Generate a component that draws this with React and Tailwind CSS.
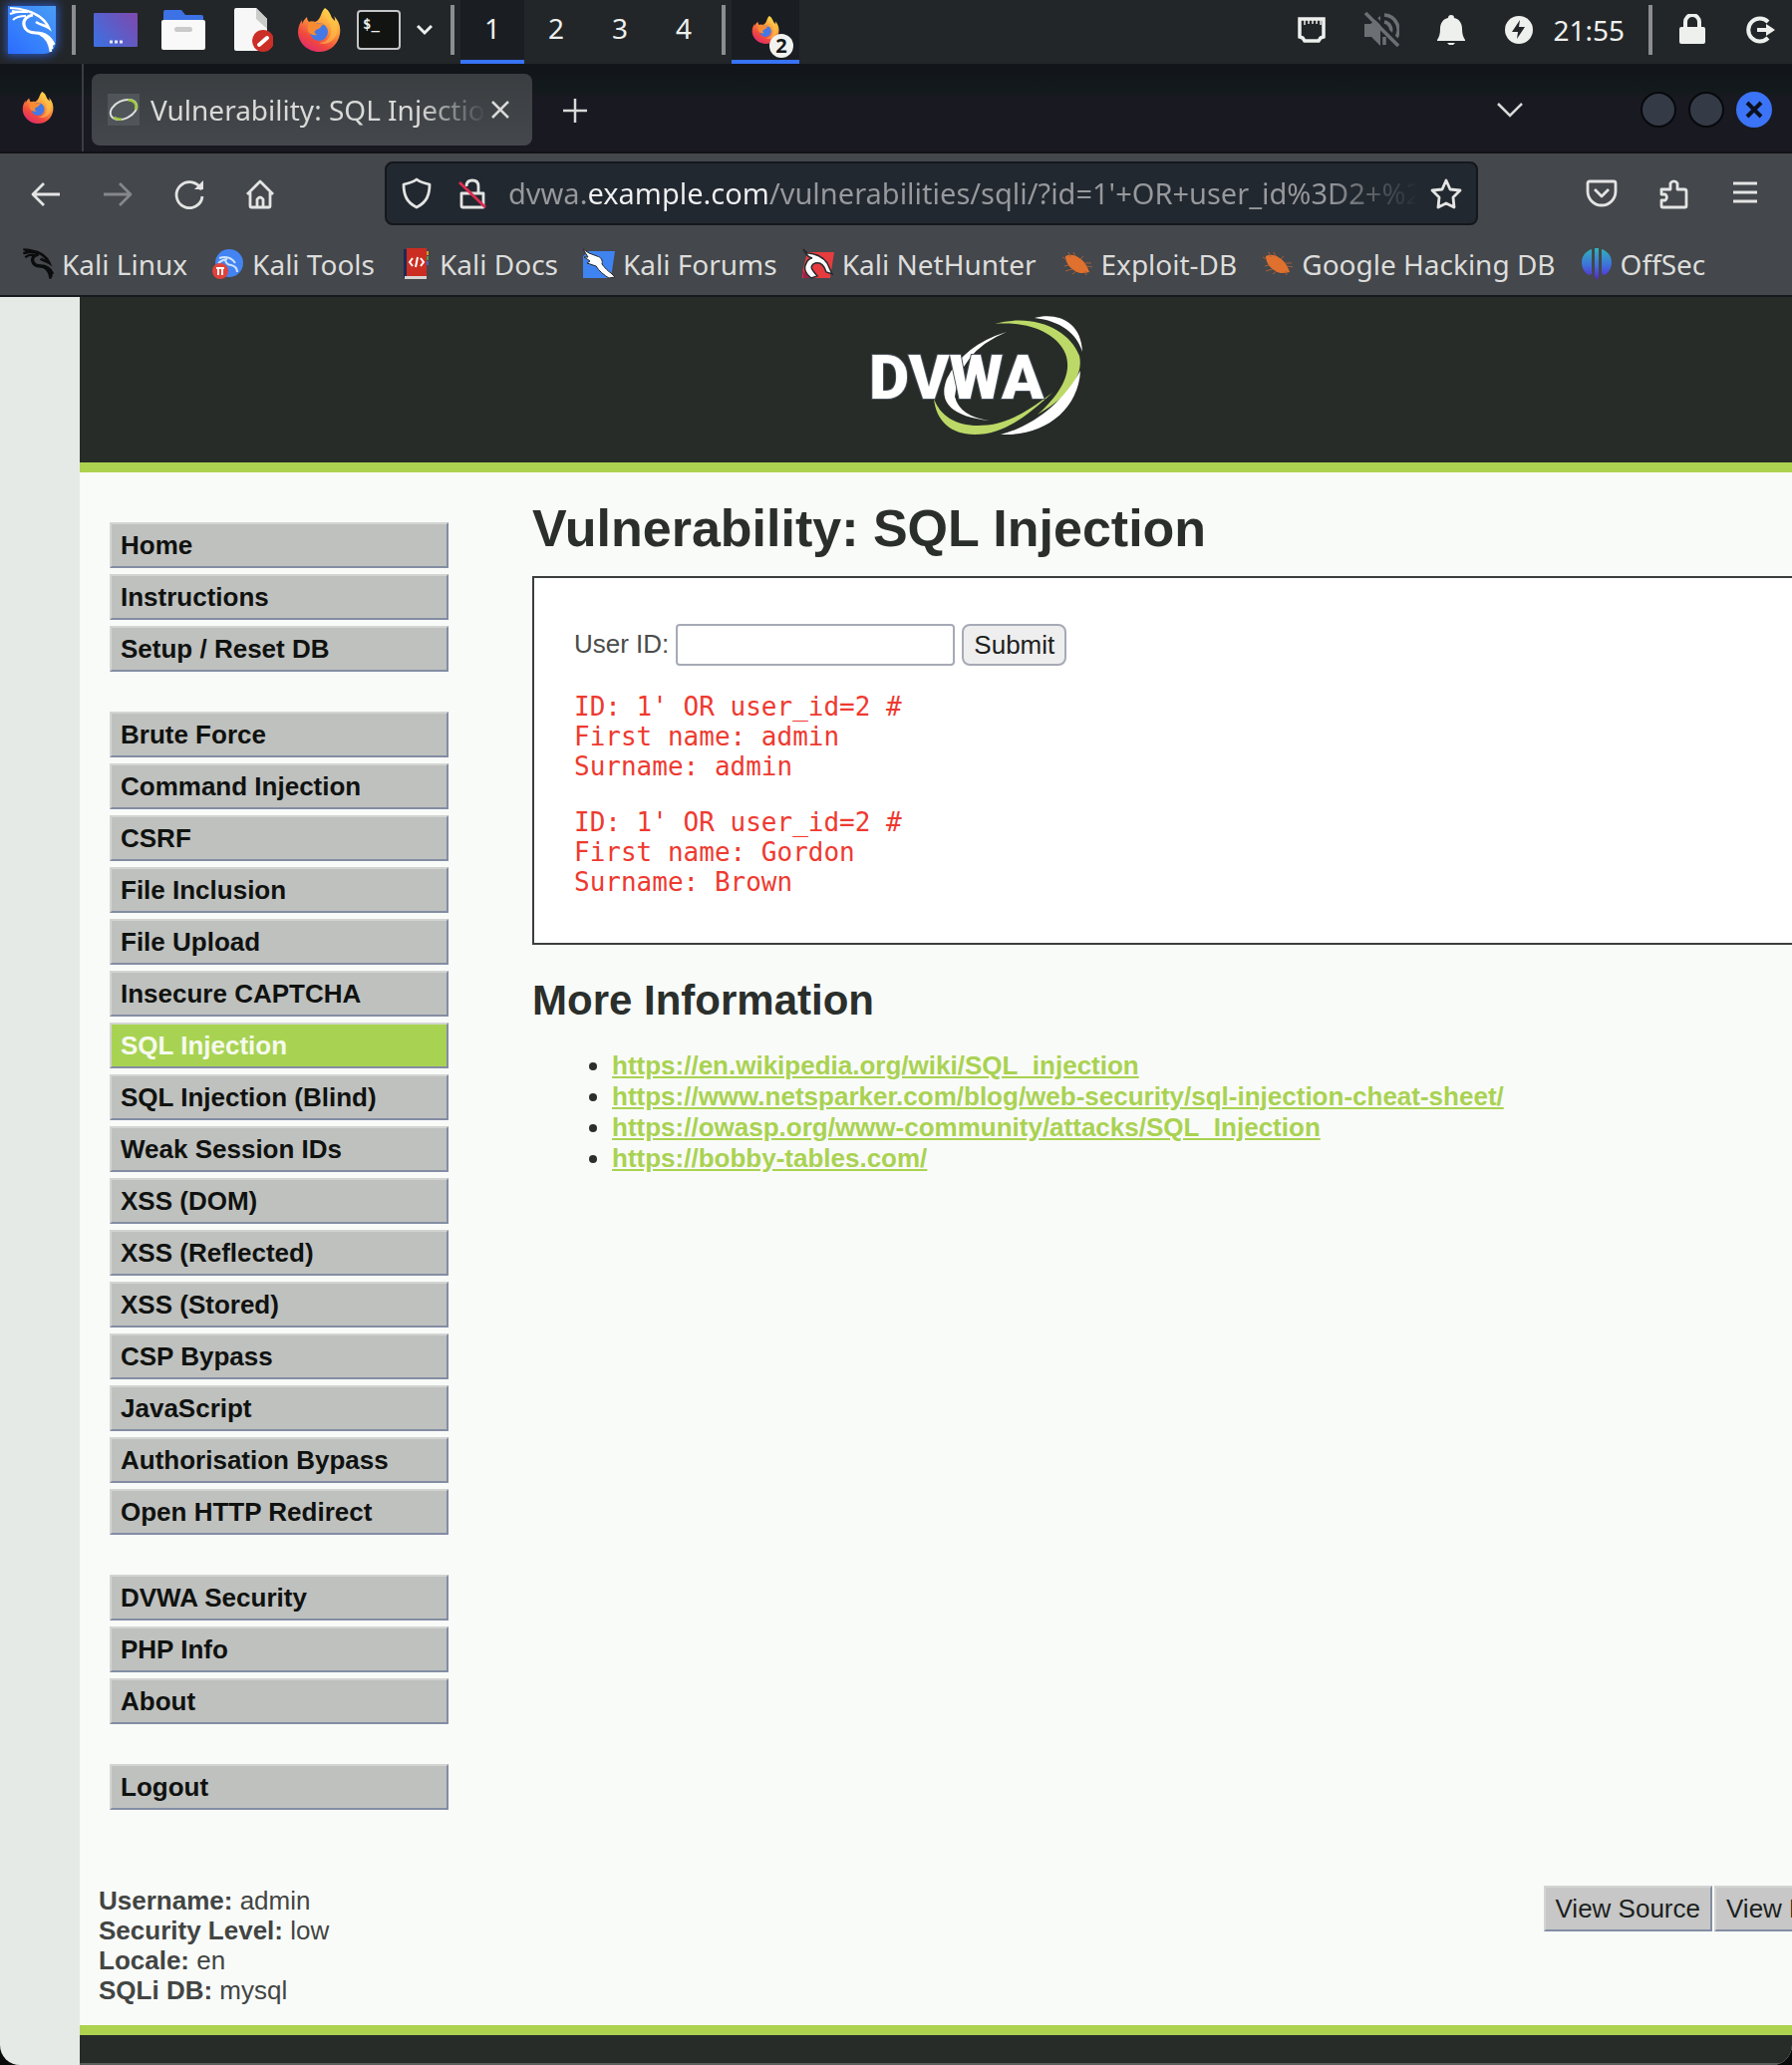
import React from "react";

const Dragon = ({ className, width = 3 }) => (
  <svg viewBox="0 0 48 48" className={className} fill="none" stroke="currentColor" strokeWidth={width} aria-hidden="true">
    <path d="M2 2c6 0 12 1 18 3M2 8c5-2 11-3 18-2M5 14c3-3 8-4 13-4M4 5c5 1 10 1 15 1" strokeWidth={width * 0.7} />
    <path d="M18 5c5 0 9 3 14 6 4 3 7 6 9 11-4-3-9-3-13-6" strokeWidth={width * 0.8} />
    <path d="M25 9c-6 1-10 5-9 10 1 5 6 8 12 8 8 0 14 3 18 12" />
    <path d="M32 28c6 3 10 9 11 18M36 29c5 4 9 8 8 14" strokeWidth={width * 0.8} />
  </svg>
);

const Firefox = ({ id, className }) => (
  <svg viewBox="0 0 44 44" className={className} aria-hidden="true">
    <defs>
      <linearGradient id={id} x1="0.85" y1="0.05" x2="0.3" y2="1">
        <stop offset="0" stopColor="#ffe14d" />
        <stop offset="0.4" stopColor="#ff9a3c" />
        <stop offset="0.75" stopColor="#f0483e" />
        <stop offset="1" stopColor="#e02c6d" />
      </linearGradient>
    </defs>
    <path
      d="M28 0c5 3 6 8 7 10l3 3c0-2 0-3-1-5 5 5 7 11 6 18-2 11-10 18-21 18S1 35 1 24c0-5 2-9 4-12v4c1-3 3-5 5-7 0 2 1 4 2 5 2 0 4-1 6 0 3-1 5-4 6-7 1-3 2-5 4-7z"
      fill={`url(#${id})`}
    />
    <circle cx="22" cy="24" r="9" fill="#4378e6" />
    <path d="M12 14c3-1 6 0 8 2 2-1 5-1 7 1-2 0-3 1-3 2-1 2-4 2-6 4-1 2 1 3 2 4-4 1-8-1-9-4-1-4 0-7 1-9z" fill="#f78b34" />
    <path d="M27 8c5 4 8 10 7 17-1 6-6 10-12 10 8 3 16-2 18-10 1-8-3-13-6-16-2-3-4-5-5-7-1 2-2 4-2 6z" fill="#ffc84a" opacity="0.55" />
  </svg>
);

const Sep = ({ className = "" }) => <div className={"h-[50px] w-1 shrink-0 bg-[#8b8d90] " + className} />;

const Bug = () => (
  <svg viewBox="0 0 32 32" className="size-8" aria-hidden="true">
    <path d="M4 8c4-2 9-2 14 2 5 3 8 8 10 14-5 1-10 2-14-1C8 20 4 14 4 8z" fill="#e0702e" />
    <path
      d="M9 9L7 4M14 8l-2-4M19 11l3-3M23 15l7 0M25 18l6 1M5 11l-4-2M7 17l-4 1M11 21l-7 2M15 23l-4 3M24 23l1 4"
      stroke="#a85f38"
      strokeWidth="1"
      fill="none"
    />
  </svg>
);

const bookmarks = [
  { name: "Kali Linux", icon: <Dragon className="size-8 text-[#0b0c0d]" width={5} /> },
  {
    name: "Kali Tools",
    icon: (
      <svg viewBox="0 0 32 32" className="size-8" aria-hidden="true">
        <circle cx="17" cy="15" r="14" fill="#4384f2" />
        <path d="M7 10c6-2 12-1 16 5M15 9c-4 4 0 8 4 8 4 1 6 3 6 7M6 15c4-3 6-4 9-4" stroke="#cfe2ff" strokeWidth="2" fill="none" />
        <circle cx="8" cy="23" r="8" fill="#e2423c" />
        <path d="M4 20h8M6 20v7M10 20v7" stroke="#fff" strokeWidth="2" />
      </svg>
    ),
  },
  {
    name: "Kali Docs",
    icon: (
      <svg viewBox="0 0 32 32" className="size-8" aria-hidden="true">
        <path d="M4 1h4v29H4z" fill="#1d2855" />
        <path d="M7 0h20v28H7z" fill="#cb2d22" />
        <path d="M27 3h2v4h-2z" fill="#d89a2b" />
        <path d="M27 8h2v4h-2z" fill="#4a9a4c" />
        <path d="M27 13h2v4h-2z" fill="#3f66c9" />
        <path d="M5 28h22v3H5z" fill="#d9d4d4" />
        <path d="M13 10l-3 4 3 4M21 10l3 4-3 4M18 9l-2 10" stroke="#fff" strokeWidth="2" fill="none" />
      </svg>
    ),
  },
  {
    name: "Kali Forums",
    icon: (
      <svg viewBox="0 0 32 32" className="size-8" aria-hidden="true">
        <path d="M6 3h26l-4 27H0V8z" fill="#3f83f0" />
        <path d="M0 1l6 4 8 3c4 1 6 4 5 8 3 4 6 7 9 9l4 4-6 1c-5-3-10-7-13-12L4 15l3-2-6-4 4 0z" fill="#fff" stroke="#26292d" strokeWidth="1" />
      </svg>
    ),
  },
  {
    name: "Kali NetHunter",
    icon: (
      <svg viewBox="0 0 32 32" className="size-8" aria-hidden="true">
        <path d="M5 4h27l-4 26H0V24z" fill="#e63c3f" />
        <path d="M0 22l8 8H1z" fill="#a0204d" />
        <path d="M1 1l4 4c8 0 16 4 20 10l5 11-6-2c-2-7-6-10-11-9-4 1-5 5-2 8l4 5-6 2C3 26 1 20 4 15c1-3 4-5 6-5C6 9 3 6 1 1z" fill="#fff" stroke="#26292d" strokeWidth="1.5" />
      </svg>
    ),
  },
  { name: "Exploit-DB", icon: <Bug /> },
  { name: "Google Hacking DB", icon: <Bug /> },
  {
    name: "OffSec",
    icon: (
      <svg viewBox="0 0 32 32" className="size-8" aria-hidden="true">
        <defs>
          <linearGradient id="offsec" x1="0" y1="0" x2="0" y2="1">
            <stop offset="0" stopColor="#2fb3b8" />
            <stop offset="0.55" stopColor="#3f6fdc" />
            <stop offset="1" stopColor="#5a22d0" />
          </linearGradient>
        </defs>
        <path d="M11 1v25l-3 1C4 25 1 20 1 14S5 3 11 1zM14 0h4v28l-2 4-2-4zM21 1c6 2 10 7 10 13s-3 11-7 13l-3-1z" fill="url(#offsec)" />
      </svg>
    ),
  },
];

const menu = [
  ["Home", "Instructions", "Setup / Reset DB"],
  [
    "Brute Force",
    "Command Injection",
    "CSRF",
    "File Inclusion",
    "File Upload",
    "Insecure CAPTCHA",
    "SQL Injection",
    "SQL Injection (Blind)",
    "Weak Session IDs",
    "XSS (DOM)",
    "XSS (Reflected)",
    "XSS (Stored)",
    "CSP Bypass",
    "JavaScript",
    "Authorisation Bypass",
    "Open HTTP Redirect",
  ],
  ["DVWA Security", "PHP Info", "About"],
  ["Logout"],
];

const links = [
  "https://en.wikipedia.org/wiki/SQL_injection",
  "https://www.netsparker.com/blog/web-security/sql-injection-cheat-sheet/",
  "https://owasp.org/www-community/attacks/SQL_Injection",
  "https://bobby-tables.com/",
];

const status = [
  ["Username:", "admin"],
  ["Security Level:", "low"],
  ["Locale:", "en"],
  ["SQLi DB:", "mysql"],
];

function Panel() {
  return (
    <div className="flex h-16 items-center bg-[#232629] pb-1 text-[#eef0ee]">
      <button aria-label="Applications" className="ml-2 flex size-12 shrink-0 items-center justify-center rounded-br-xl bg-linear-to-tr from-[#2d6bff] to-[#4a9df5] shadow-[0_0_8px_2px_#2a55b8]">
        <Dragon className="size-12 text-white" width={3.2} />
      </button>
      <Sep className="ml-4" />
      <div className="ml-[18px] flex shrink-0 items-center gap-6">
        <button aria-label="Show desktop">
          <svg viewBox="0 0 44 44" className="size-11">
            <defs>
              <linearGradient id="desk" x1="0" y1="0.8" x2="1" y2="0.2">
                <stop offset="0" stopColor="#3f6fe0" />
                <stop offset="1" stopColor="#7a4bb0" />
              </linearGradient>
            </defs>
            <rect y="5" width="44" height="34" rx="1" fill="url(#desk)" />
            <path d="M16 34h3M21 34h3M26 34h3" stroke="#e5e7f5" strokeWidth="3" />
          </svg>
        </button>
        <button aria-label="Files">
          <svg viewBox="0 0 44 44" className="size-11">
            <path d="M4 2h16l4 5h16q2 0 2 2v8H2V4q0-2 2-2z" fill="#3c72e6" />
            <rect y="12" width="44" height="30" rx="2" fill="#f8f9f8" />
            <rect x="13" y="19" width="18" height="5" rx="2.5" fill="#c9cac9" />
          </svg>
        </button>
        <button aria-label="Text editor">
          <svg viewBox="0 0 44 44" className="size-11">
            <path d="M7 0h20l11 11v32H7q-2 0-2-2V2q0-2 2-2z" fill="#f7f7f7" />
            <path d="M27 0l11 11v10L27 11z" fill="#c9ccc9" />
            <circle cx="34" cy="33" r="11" fill="#cb2f28" />
            <path d="M30 37l8-7" stroke="#fff" strokeWidth="4" strokeLinecap="round" />
          </svg>
        </button>
        <button aria-label="Firefox">
          <Firefox id="ff1" className="size-11" />
        </button>
      </div>
      <button aria-label="Terminal" className="ml-4 flex h-10 w-11 shrink-0 rounded-sm border-2 border-[#c3c5c6] bg-[#111411] pt-1 pl-1 font-['DejaVu_Sans_Mono',monospace] text-sm leading-4 font-bold">
        $_
      </button>
      <button aria-label="More launchers" className="ml-4 shrink-0">
        <svg viewBox="0 0 16 16" className="size-4">
          <path d="M1 4l7 7 7-7" fill="none" stroke="currentColor" strokeWidth="3" />
        </svg>
      </button>
      <Sep className="ml-[18px]" />
      <div className="-mb-1 ml-1.5 flex h-16 shrink-0 text-[28px]">
        {["1", "2", "3", "4"].map((n, i) => (
          <button key={n} className={"w-16 border-b-4 pb-1 " + (i === 0 ? "border-[#3873f5] bg-[#1a1d22]" : "border-transparent")}>
            {n}
          </button>
        ))}
      </div>
      <Sep className="ml-1.5" />
      <button aria-label="Firefox windows" className="relative -mb-1 ml-1.5 flex h-16 w-[68px] shrink-0 justify-center border-b-4 border-[#3873f5] bg-[#1a1d22] pt-4">
        <Firefox id="ff2" className="size-7" />
        <span className="absolute top-[34px] left-[38px] size-6 rounded-full bg-[#f1f2f0] text-center text-xl leading-6 font-bold text-[#15181b]">2</span>
      </button>
      <div className="ml-auto flex shrink-0 items-center">
        <svg viewBox="0 0 32 32" className="size-8" aria-label="Network">
          <path d="M4 5h24v18l-3 1-2 3H9l-2-3-3-1z" fill="none" stroke="currentColor" strokeWidth="3.500" />
          <path d="M9 6v5M13 6v4M17 6v4M21 6v4M25 6v5" stroke="currentColor" strokeWidth="1.5" />
        </svg>
        <svg viewBox="0 0 36 36" className="ml-9 size-9 text-[#6c6f73]" aria-label="Muted">
          <path d="M1 12h6l10-8v30l-9-9H1z" fill="currentColor" />
          <path d="M21 3a15 15 0 0 1 11 24M21 10a8 8 0 0 1 6 11M21 25v8" fill="none" stroke="currentColor" strokeWidth="3.500" />
          <path d="M6 0l31 31" stroke="#232629" strokeWidth="3" />
          <path d="M2 1l33 33" stroke="currentColor" strokeWidth="3.500" />
        </svg>
        <svg viewBox="0 0 32 32" className="ml-9 size-8" aria-label="Notifications">
          <path d="M16 1c2 0 3 1 3 3 5 1 8 5 8 11 0 5 1 8 3 11v1H2v-1c2-3 3-6 3-11C5 9 8 5 13 4c0-2 1-3 3-3z" fill="currentColor" />
          <path d="M12 29h8l-2 2h-4z" fill="currentColor" />
        </svg>
        <svg viewBox="0 0 32 32" className="ml-9 size-8" aria-label="Power">
          <circle cx="16" cy="16" r="14" fill="currentColor" />
          <path d="M17 6L9 18h6l-1 7 8-12h-6z" fill="#232629" />
        </svg>
        <span className="ml-[18px] text-[28px]">21:55</span>
        <Sep className="ml-6" />
        <svg viewBox="0 0 32 32" className="ml-6 size-8" aria-label="Lock">
          <rect x="3" y="13" width="26" height="17" rx="2" fill="currentColor" />
          <path d="M9 14V8a7 7 0 0 1 14 0v6" fill="none" stroke="currentColor" strokeWidth="4" />
        </svg>
        <svg viewBox="0 0 32 32" className="mr-4 ml-9 size-8" aria-label="Log out">
          <path d="M24 8a11.500 11.500 0 1 0 0 16" fill="none" stroke="currentColor" strokeWidth="4" />
          <path d="M13 16h11" stroke="currentColor" strokeWidth="4" />
          <path d="M22 10l9 6-9 6z" fill="currentColor" />
        </svg>
      </div>
    </div>
  );
}

function TabBar() {
  return (
    <div className="flex h-[90px] items-start border-b-2 border-[#111214] bg-linear-to-b from-[#12161b] from-10% via-[#131a1b] via-30% to-[#191922] to-40% text-[#d9dad8]">
      <div className="flex h-full w-[84px] shrink-0 items-center justify-center border-r-2 border-[#3b3d42] pr-1.5">
        <Firefox id="ff3" className="size-8" />
      </div>
      <div className="mt-2.5 ml-2 flex h-18 w-[442px] shrink-0 items-center rounded-lg bg-linear-to-b from-[#3b3e41] to-[#44474b] pr-[22px] pl-4">
        <svg viewBox="0 0 32 32" className="size-8 shrink-0 bg-[#50555a]" aria-hidden="true">
          <g transform="rotate(-25 16 16)" fill="none">
            <ellipse cx="16" cy="16" rx="14" ry="9" stroke="#dfe2dd" strokeWidth="2" />
            <path d="M10 24a14 9 0 0 1-6-5M24 9a14 9 0 0 1 3 12" stroke="#9fc63f" strokeWidth="2.500" />
          </g>
        </svg>
        <span className="ml-[11px] min-w-0 flex-1 overflow-hidden text-[28px] leading-10 whitespace-nowrap [mask-image:linear-gradient(to_right,black_80%,transparent)]">
          Vulnerability: SQL Injection
        </span>
        <button aria-label="Close tab" className="ml-1 shrink-0">
          <svg viewBox="0 0 20 20" className="size-5">
            <path d="M2 2l16 16M18 2L2 18" stroke="currentColor" strokeWidth="2.500" />
          </svg>
        </button>
      </div>
      <button aria-label="New tab" className="mt-[34px] ml-[30px] shrink-0">
        <svg viewBox="0 0 26 26" className="size-[26px]">
          <path d="M13 1v24M1 13h24" stroke="currentColor" strokeWidth="2.500" />
        </svg>
      </button>
      <div className="mt-7 mr-5 ml-auto flex shrink-0 items-center gap-3">
        <button aria-label="List tabs" className="mr-[106px]">
          <svg viewBox="0 0 26 26" className="size-[26px]">
            <path d="M1 7l12 12L25 7" fill="none" stroke="currentColor" strokeWidth="2.500" />
          </svg>
        </button>
        <button aria-label="Minimize" className="size-9 rounded-full border-2 border-[#08090c] bg-[#343b47]" />
        <button aria-label="Maximize" className="size-9 rounded-full border-2 border-[#08090c] bg-[#343b47]" />
        <button aria-label="Close window" className="flex size-9 items-center justify-center rounded-full bg-[#3b74f6]">
          <svg viewBox="0 0 18 18" className="size-[18px]">
            <path d="M2 2l14 14M16 2L2 16" stroke="#0b1020" strokeWidth="4" />
          </svg>
        </button>
      </div>
    </div>
  );
}

const Tool = ({ label, className = "", children }) => (
  <button aria-label={label} className={"shrink-0 " + className}>
    <svg viewBox="0 0 32 32" className="size-8" fill="none" stroke="currentColor" strokeWidth="2.800" strokeLinejoin="round">
      {children}
    </svg>
  </button>
);

function NavBar() {
  return (
    <div className="flex items-center py-2 pl-[30px] text-[#e3e4e3]">
      <Tool label="Back"><path d="M30 17H3M14 6L3 17l11 11" /></Tool>
      <Tool label="Forward" className="ml-10 text-[#85878a]"><path d="M2 17h27M18 6l11 11-11 11" /></Tool>
      <Tool label="Reload" className="ml-10">
        <path d="M28 12.500A13 13 0 1 0 29 19" />
        <path d="M30 3v9h-9z" fill="currentColor" stroke="none" />
      </Tool>
      <Tool label="Home" className="ml-[39px]">
        <path d="M3 17L16 4l13 13M6 15v14q0 1 1 1h18q1 0 1-1V15M13 30V22q3-4 6 0v8" />
      </Tool>
      <div className="mr-[108px] ml-[109px] flex h-16 min-w-0 flex-1 items-center rounded-lg border-2 border-[#14171b] bg-[#222830] px-3.5">
        <Tool label="Tracking protection">
          <path d="M16 2c4 3 8 4 13 5 0 11-3 18-13 23C6 25 3 18 3 7c5-1 9-2 13-5z" />
        </Tool>
        <Tool label="Connection not secure" className="ml-6">
          <path d="M5 16h22v14H6q-1 0-1-1zM10 9q0-6 6-6t6 6v7" />
          <path d="M3 5l26 25" stroke="#dd2c50" />
        </Tool>
        <input
          aria-label="Address"
          readOnly
          value="dvwa.example.com/vulnerabilities/sqli/?id=1'+OR+user_id%3D2+%23&Submit=Submit#"
          className="ml-5 min-w-0 flex-1 bg-[linear-gradient(to_right,#97999c_80px,#f1f1f2_80px,#f1f1f2_263px,#97999c_263px,#97999c_90%,transparent)] bg-clip-text text-[29px] leading-10 text-transparent outline-none"
        />
        <Tool label="Bookmark this page" className="ml-3">
          <path d="M16 3l4 9 10 1-7 7 1 10-8-4-8 4 1-10-7-7 10-1z" />
        </Tool>
      </div>
      <Tool label="Pocket">
        <path d="M4 4h24q2 0 2 2v8a14 14 0 0 1-28 0V6q0-2 2-2z" />
        <path d="M9 12l7 7 7-7" />
      </Tool>
      <Tool label="Extensions" className="ml-10">
        <path d="M4 12h9V6a4 4 0 0 1 7 0v6h7q2 0 2 2v15q0 1-1 1H5q-1 0-1-1v-6h4a4 4 0 0 0 0-6H4z" />
      </Tool>
      <Tool label="Menu" className="mr-[31px] ml-10"><path d="M4 6h24M4 15h24M4 24h24" /></Tool>
    </div>
  );
}

const bevel = "border-2 border-t-[#d3d5d3] border-l-[#d3d5d3] border-r-[#838da3] border-b-[#838da3]";

function Logo() {
  return (
    <svg viewBox="0 0 220 130" className="h-[130px] w-[220px]" role="img" aria-label="DVWA">
      <path d="M137 19Q94 32 77 66q-14 36 43 42-30-4-35-24 4-45 52-65z" fill="#fff" />
      <path d="M64 86c2 22 17 36 41 36 30 0 54-20 78-42-32 24-50 33-75 33-22 0-38-10-44-27z" fill="#bcd968" />
      <path d="M125 11c40-11 75 6 85 32 5 22-15 44-42 59 20-18 36-40 28-61-8-20-36-33-71-30z" fill="#bcd968" />
      <path d="M165 5c22-6 47 3 48 34-6-19-22-31-48-34z" fill="#fff" />
      <path d="M211 58c-2 40-37 66-80 64 34-9 63-33 80-64z" fill="#fff" />
      <text x="-1" y="86" fill="#fff" stroke="#4a525c" strokeWidth="2" className="font-['Roboto',sans-serif] text-[62px] font-black [paint-order:stroke]">
        DVWA
      </text>
    </svg>
  );
}

function Page() {
  return (
    <div className="flex-1 bg-[#e6eae6] pl-20 font-['Liberation_Sans',Arial,sans-serif] text-[26px] text-[#2b2f2c]">
      <header className="flex h-[176px] justify-center border-b-10 border-[#add24f] bg-[#282c29] pt-4 pl-[88px]">
        <Logo />
      </header>
      <div className="bg-[#f9fbf9]">
        <div className="flex">
          <nav className="w-[370px] shrink-0 pt-[50px] pl-[30px]">
            {menu.map((group, g) => (
              <ul key={g} className={"flex flex-col gap-1.5 " + (g ? "mt-10" : "")}>
                {group.map((item) => (
                  <li key={item}>
                    <a
                      href="#"
                      className={
                        "block h-[46px] pl-[9px] leading-[42px] font-bold " +
                        bevel +
                        (item === "SQL Injection" ? " bg-[#a8d352] text-[#f6faee]" : " bg-[#bfc1bf] text-[#101210]")
                      }
                    >
                      {item}
                    </a>
                  </li>
                ))}
              </ul>
            ))}
          </nav>
          <main className="min-w-0 flex-1 pt-[26px] pl-[84px]">
            <h1 className="text-[52px] leading-[60px] font-bold">Vulnerability: SQL Injection</h1>
            <div className="mt-[18px] border-2 border-r-0 border-[#3b3e3c] bg-white py-[46px] pl-10">
              <form className="flex items-center gap-[7px] text-[#4a4d4b]" onSubmit={(e) => e.preventDefault()}>
                <label htmlFor="uid" className="pb-0.5">User ID:</label>
                <input id="uid" type="text" className="h-[42px] w-[280px] rounded-sm border-2 border-[#a6aab6] bg-white px-2" />
                <button type="submit" className="h-[42px] rounded-lg border-2 border-[#a6aab6] bg-[#eeeeee] px-2.5 leading-[38px] text-[#1d1f1e]">
                  Submit
                </button>
              </form>
              <pre className="mt-[26px] font-['DejaVu_Sans_Mono',monospace] leading-[30px] text-[#ee3a30]">
                {"ID: 1' OR user_id=2 #\nFirst name: admin\nSurname: admin"}
              </pre>
              <pre className="mt-[26px] font-['DejaVu_Sans_Mono',monospace] leading-[30px] text-[#ee3a30]">
                {"ID: 1' OR user_id=2 #\nFirst name: Gordon\nSurname: Brown"}
              </pre>
            </div>
            <h2 className="mt-8 text-[42px] leading-[48px] font-bold">More Information</h2>
            <ul className="mt-[26px] list-disc pl-20 leading-[31px]">
              {links.map((l) => (
                <li key={l}>
                  <a href={l} className="font-bold text-[#a9d252] underline">{l}</a>
                </li>
              ))}
            </ul>
          </main>
        </div>
        <div className="flex items-start justify-between pt-[76px] pb-5 pl-[19px]">
          <div className="leading-[30px] text-[#424543]">
            {status.map(([k, v]) => (
              <div key={k}>
                <b>{k}</b> {v}
              </div>
            ))}
          </div>
          <div className="flex gap-0.5 text-[#1d1f1e]">
            <button className={"h-[46px] bg-[#c6c7c6] px-2.5 leading-[42px] " + bevel}>View Source</button>
            <div className="w-[78px] overflow-hidden">
              <button className={"h-[46px] bg-[#c6c7c6] px-2.5 leading-[42px] whitespace-nowrap " + bevel}>View Help</button>
            </div>
          </div>
        </div>
      </div>
      <footer className="h-10 border-t-10 border-b-2 border-t-[#add24f] border-b-[#5b5e5c] bg-[#282c29]" />
    </div>
  );
}

export default function App() {
  return (
    <div className="bg-[#0b0b0b]">
      <div className="flex min-h-screen flex-col overflow-hidden rounded-b-[20px] font-['Noto_Sans',sans-serif]">
        <Panel />
        <TabBar />
        <div className="border-b-2 border-[#17191c] bg-[#44474b]">
          <NavBar />
          <div className="flex h-[62px] items-center gap-[25px] pl-[22px] text-[28px] whitespace-nowrap text-[#dcdddb]">
            {bookmarks.map((b) => (
              <a key={b.name} href="#" className="flex shrink-0 items-center gap-2">
                {b.icon}
                {b.name}
              </a>
            ))}
          </div>
        </div>
        <Page />
      </div>
    </div>
  );
}
